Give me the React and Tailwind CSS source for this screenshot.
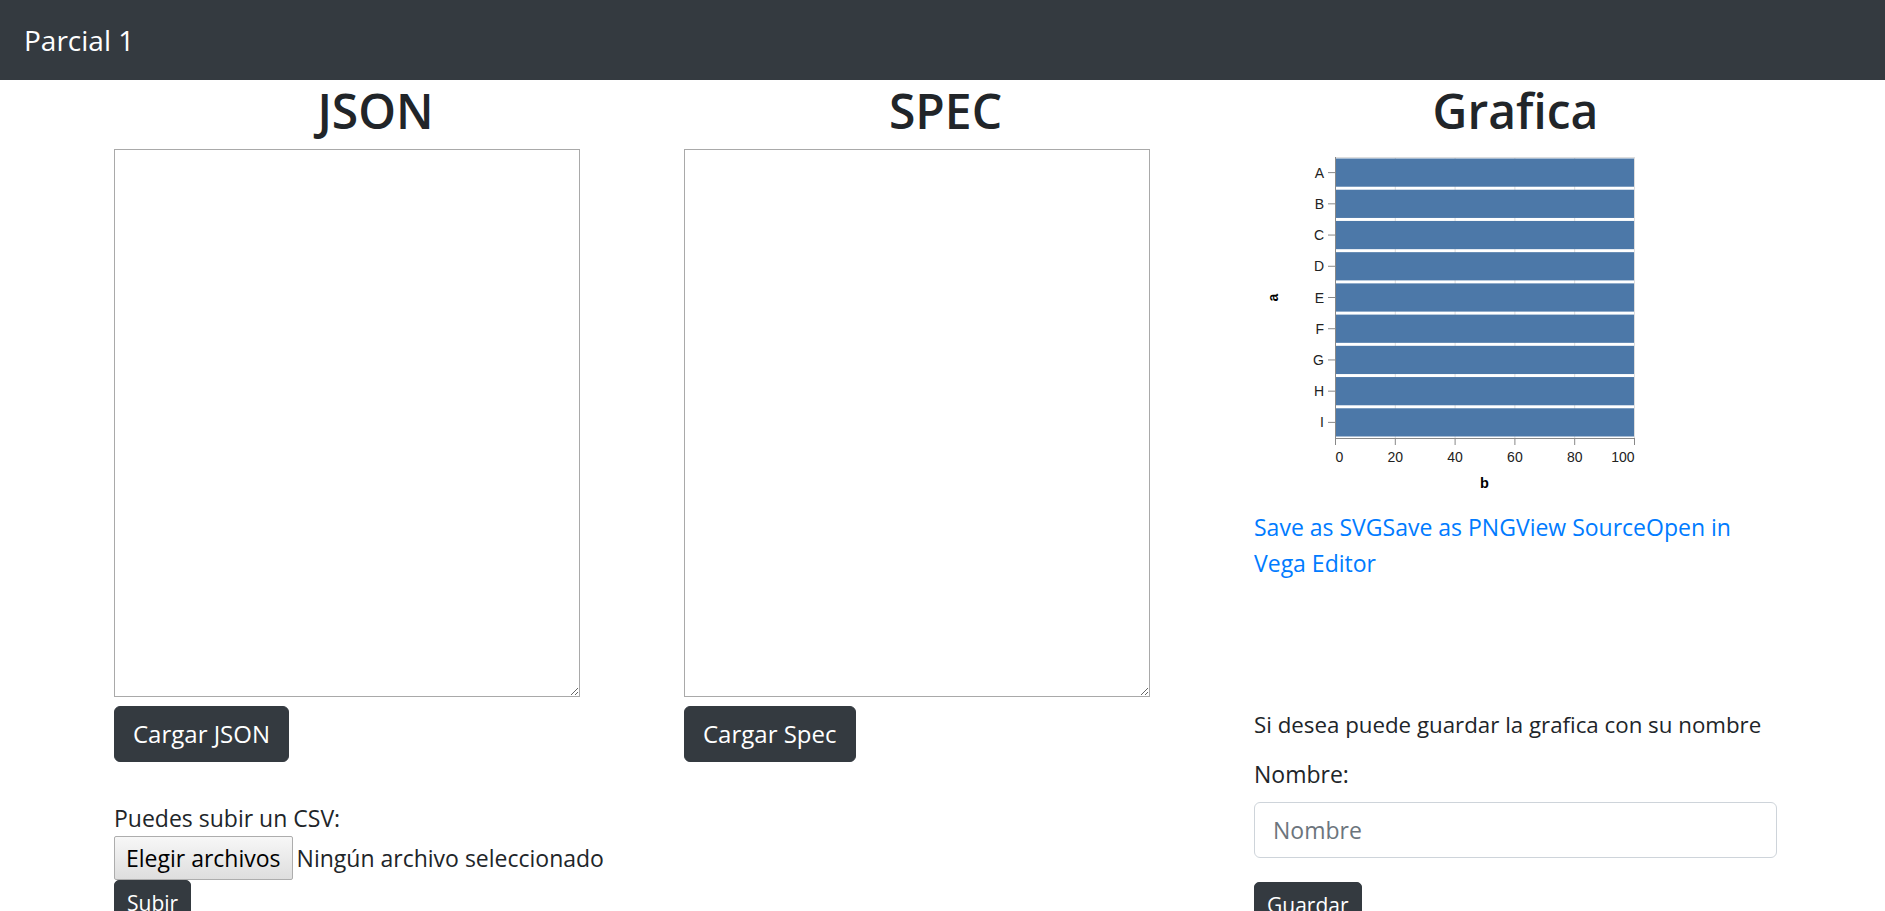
import React from "react";

const cats = ["A", "B", "C", "D", "E", "F", "G", "H", "I"];

function BarChart() {
  const x0 = 81;
  const x1 = 380;
  const y0 = 8;
  const y1 = 289;
  const step = (y1 - y0) / cats.length;
  const ticks = [0, 20, 40, 60, 80, 100];
  const sx = (v) => x0 + (v / 100) * (x1 - x0);

  return (
    <svg width="523" height="360" className="block" style={{ fontFamily: "'Liberation Sans', Arial, sans-serif" }}>
      {/* grid */}
      {ticks.map((t) => (
        <line key={"g" + t} x1={sx(t) + 0.5} x2={sx(t) + 0.5} y1={y0} y2={y1} stroke="#ddd" strokeWidth="1" />
      ))}
      <line x1={x0} x2={x1} y1={y0 + 0.5} y2={y0 + 0.5} stroke="#ddd" strokeWidth="1" />
      {/* bars */}
      {cats.map((c, i) => (
        <rect key={c} x={x0} y={y0 + i * step + 1.5} width={x1 - x0} height={step - 3} fill="#4c78a8" />
      ))}
      {/* y axis */}
      <line x1={x0 + 0.5} x2={x0 + 0.5} y1={y0} y2={y1} stroke="#888" strokeWidth="1" />
      {cats.map((c, i) => {
        const cy = y0 + i * step + step / 2;
        return (
          <g key={"y" + c}>
            <line x1={x0 - 7} x2={x0} y1={cy} y2={cy} stroke="#888" strokeWidth="1" />
            <text x={x0 - 11} y={cy + 5} fontSize="14" textAnchor="end" fill="#222">
              {c}
            </text>
          </g>
        );
      })}
      <text transform={`translate(24,${(y0 + y1) / 2}) rotate(-90)`} fontSize="14" fontWeight="bold" textAnchor="middle" fill="#000">
        a
      </text>
      {/* x axis */}
      <line x1={x0} x2={x1 + 1} y1={y1 + 0.5} y2={y1 + 0.5} stroke="#888" strokeWidth="1" />
      {ticks.map((t, k) => (
        <g key={"x" + t}>
          <line x1={sx(t) + 0.5} x2={sx(t) + 0.5} y1={y1} y2={y1 + 7} stroke="#888" strokeWidth="1" />
          <text
            x={sx(t) + 0.5}
            y={y1 + 24}
            fontSize="14"
            textAnchor={k === 0 ? "start" : k === ticks.length - 1 ? "end" : "middle"}
            fill="#222"
          >
            {t}
          </text>
        </g>
      ))}
      <text x={(x0 + x1) / 2} y={y1 + 50} fontSize="14.5" fontWeight="bold" textAnchor="middle" fill="#000">
        b
      </text>
    </svg>
  );
}

function DarkButton({ children, small }) {
  return (
    <button
      className={
        small
          ? "h-[46px] px-[12px] rounded-[5px] bg-[#343a40] border border-[#343a40] text-white text-[21px] leading-[30px]"
          : "h-[56px] px-[18px] rounded-[6px] bg-[#343a40] border border-[#343a40] text-white text-[24px] leading-[36px]"
      }
    >
      {children}
    </button>
  );
}

export default function App() {
  return (
    <div className="min-h-screen bg-white text-[#212529]" style={{ fontFamily: "'Open Sans', 'Noto Sans', sans-serif" }}>
      <nav className="h-[80px] bg-[#343a40] flex items-center px-[24px]">
        <span className="text-[28px] text-white">Parcial 1</span>
      </nav>

      <div className="grid grid-cols-[523px_523px_523px] gap-x-[47px] pl-[114px]">
        {/* JSON */}
        <div className="flex flex-col items-start">
          <h1 className="self-stretch mt-[2px] mb-[9px] text-center text-[48px] leading-[58px] font-semibold">JSON</h1>
          <textarea className="block w-[466px] h-[548px] border border-[#a9a9a9] bg-white" />
          <div className="mt-[9px]">
            <DarkButton>Cargar JSON</DarkButton>
          </div>
          <p className="mt-[38px] text-[23px] leading-[36px]">Puedes subir un CSV:</p>
          <div className="flex items-center text-[23px]">
            <span className="h-[44px] px-[11px] flex items-center border border-[#adadad] rounded-[2px] bg-linear-to-b from-[#f7f7f7] to-[#dedede] text-black">
              Elegir archivos
            </span>
            <span className="ml-[4px]">Ningún archivo seleccionado</span>
          </div>
          <DarkButton small>Subir</DarkButton>
        </div>

        {/* SPEC */}
        <div className="flex flex-col items-start">
          <h1 className="self-stretch mt-[2px] mb-[9px] text-center text-[48px] leading-[58px] font-semibold">SPEC</h1>
          <textarea className="block w-[466px] h-[548px] border border-[#a9a9a9] bg-white" />
          <div className="mt-[9px]">
            <DarkButton>Cargar Spec</DarkButton>
          </div>
        </div>

        {/* Grafica */}
        <div className="flex flex-col items-start">
          <h1 className="self-stretch mt-[2px] mb-[9px] text-center text-[48px] leading-[58px] font-semibold">Grafica</h1>
          <BarChart />
          <div className="text-[23px] leading-[36px] text-[#007bff]">
            <a href="#">Save as SVG</a>
            <a href="#">Save as PNG</a>
            <a href="#">View Source</a>
            <a href="#">
              Open in
              <br />
              Vega Editor
            </a>
          </div>
          <p className="mt-[126px] text-[22.3px] leading-[36px] whitespace-nowrap">
            Si desea puede guardar la grafica con su nombre
          </p>
          <label className="mt-[13px] text-[23px] leading-[36px]">Nombre:</label>
          <input
            placeholder="Nombre"
            className="mt-[10px] w-[523px] h-[56px] px-[18px] border border-[#ced4da] rounded-[6px] text-[23px] placeholder:text-[#6c757d] outline-none"
          />
          <div className="mt-[24px]">
            <DarkButton small>Guardar</DarkButton>
          </div>
        </div>
      </div>
    </div>
  );
}
